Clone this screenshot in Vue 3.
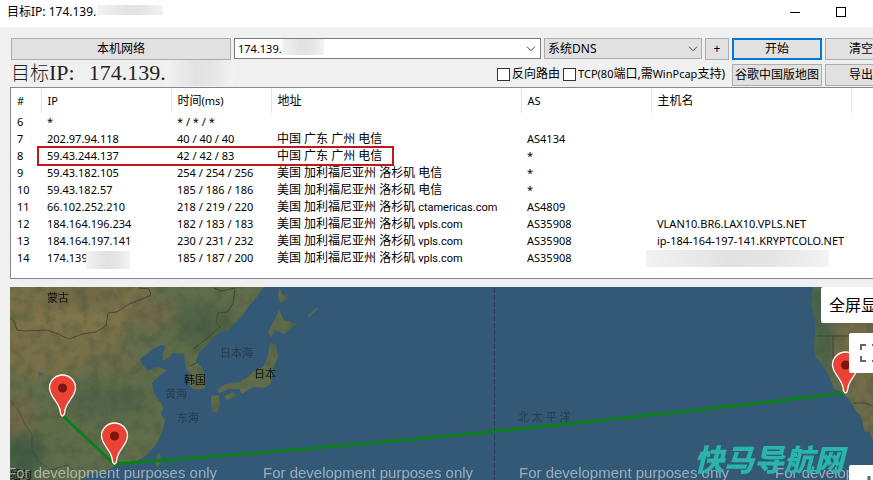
<script setup>
import { ref } from 'vue'

const address = ref('174.139.')
const dns = ref('系统DNS')
const reverse = ref(false)
const tcp = ref(false)

const hops = [
  { n: 6, ip: '*', time: '* / * / *' },
  { n: 7, ip: '202.97.94.118', time: '40 / 40 / 40', place: '中国 广东 广州 电信', as: 'AS4134' },
  { n: 8, ip: '59.43.244.137', time: '42 / 42 / 83', place: '中国 广东 广州 电信', as: '*', marked: true },
  { n: 9, ip: '59.43.182.105', time: '254 / 254 / 256', place: '美国 加利福尼亚州 洛杉矶 电信', as: '*' },
  { n: 10, ip: '59.43.182.57', time: '185 / 186 / 186', place: '美国 加利福尼亚州 洛杉矶 电信', as: '*' },
  { n: 11, ip: '66.102.252.210', time: '218 / 219 / 220', place: '美国 加利福尼亚州 洛杉矶', domain: 'ctamericas.com', as: 'AS4809' },
  { n: 12, ip: '184.164.196.234', time: '182 / 183 / 183', place: '美国 加利福尼亚州 洛杉矶', domain: 'vpls.com', as: 'AS35908', host: 'VLAN10.BR6.LAX10.VPLS.NET' },
  { n: 13, ip: '184.164.197.141', time: '230 / 231 / 232', place: '美国 加利福尼亚州 洛杉矶', domain: 'vpls.com', as: 'AS35908', host: 'ip-184-164-197-141.KRYPTCOLO.NET' },
  { n: 14, ip: '174.139', time: '185 / 187 / 200', place: '美国 加利福尼亚州 洛杉矶', domain: 'vpls.com', as: 'AS35908', masked: true }
]

const pins = [
  { x: 62, y: 388 },
  { x: 114, y: 436 },
  { x: 845, y: 365 }
]
const notices = [7, 263, 519, 775]
</script>

<template>
  <div class="screen">
    <div class="window">
      <header class="titlebar">
        <span class="title">目标IP: 174.139.</span>
        <span class="mask mask-title"></span>
        <div class="caption">
          <button type="button" aria-label="最小化"><svg width="12" height="12"><path d="M1 6.5H11" stroke="#000" /></svg></button>
          <button type="button" aria-label="最大化"><svg width="12" height="12"><rect x="1.5" y="1.5" width="9" height="9" fill="none" stroke="#000" /></svg></button>
        </div>
      </header>

      <main class="body">
        <div class="toolbar">
          <button type="button" class="btn local">本机网络</button>
          <div class="combo">
            <input v-model="address" type="text" aria-label="目标地址" />
            <span class="mask mask-combo"></span>
            <button type="button" class="drop" aria-label="展开">
              <svg width="10" height="6"><path d="M1 .7L5 4.7L9 .7" fill="none" stroke="#444" /></svg>
            </button>
          </div>
          <div class="dns">
            <select v-model="dns" aria-label="DNS"><option>系统DNS</option></select>
            <svg width="10" height="6"><path d="M1 .7L5 4.7L9 .7" fill="none" stroke="#444" /></svg>
          </div>
          <button type="button" class="btn plus">+</button>
          <button type="button" class="btn action primary">开始</button>
          <button type="button" class="btn side">清空</button>
        </div>

        <div class="toolbar second">
          <h1><span><b>目标</b>IP:</span><span>174.139.</span></h1>
          <span class="mask mask-heading"></span>
          <div class="checks">
            <label><input v-model="reverse" type="checkbox" />反向路由</label>
            <label><input v-model="tcp" type="checkbox" /><span><small>TCP(80</small>端口,需<small>WinPcap</small>支持)</span></label>
          </div>
          <button type="button" class="btn action">谷歌中国版地图</button>
          <button type="button" class="btn side">导出</button>
        </div>

        <div class="list">
          <table>
            <colgroup>
              <col class="c-n" /><col class="c-ip" /><col class="c-time" /><col class="c-place" /><col class="c-as" /><col class="c-host" /><col />
            </colgroup>
            <thead>
              <tr><th>#</th><th>IP</th><th><b>时间</b>(ms)</th><th><b>地址</b></th><th>AS</th><th><b>主机名</b></th><th></th></tr>
            </thead>
            <tbody>
              <tr v-for="h in hops" :key="h.n">
                <td>{{ h.n }}<span v-if="h.marked" class="marker"></span></td>
                <td>{{ h.ip }}<span v-if="h.masked" class="mask mask-ip"></span></td>
                <td>{{ h.time }}</td>
                <td class="place"><b>{{ h.place }}</b> <span class="domain">{{ h.domain }}</span></td>
                <td>{{ h.as }}</td>
                <td>{{ h.host }}<span v-if="h.masked" class="mask mask-host"></span></td>
                <td></td>
              </tr>
            </tbody>
          </table>
        </div>

        <div class="map">
          <svg class="canvas" viewBox="10 287 887 193" preserveAspectRatio="xMinYMin slice">
            <defs>
              <clipPath id="land">
                <path d="M10 287H264L256 298L248 307L243 315L235 323L229 330L220 332L212 339L205 347L199 352L196 361L203 369L206 380L205 388L198 390L191 388L189 380L190 374L186 368L185 361L184 354L173 353L166 360L162 360L163 353L166 346L161 345L153 349L147 354L140 359L142 364L148 371L157 367L167 370L160 375L152 383L154 393L161 403L163 409L161 414L165 420L163 430L157 443L147 455L137 461L126 464L115 466L104 472L92 473L84 478L82 480H10Z" />
                <path d="M279 287L282 294L288 298L281 303L278 297ZM279 310L284 320L297 324L290 329L284 334L275 330L271 337L268 332L274 321Z" />
                <path d="M270 342L276 345L278 357L273 368L271 384L264 388L255 387L248 390L242 394L239 389L229 389L219 393L217 389L226 384L236 383L247 378L254 371L263 367L268 356ZM224 396L233 392L236 396L227 400ZM211 396L219 395L220 405L217 412L212 411L211 404ZM157 456L160 452L161 460L158 468L155 464ZM308 315L317 308L318 309L309 317Z" />
                <path d="M813 287H915V480H884L875 443L869 431L865 432L861 417L856 411L849 399L839 391L834 389L830 378L824 367L816 357L814 348L816 326L812 306Z" />
              </clipPath>
              <filter id="soft" color-interpolation-filters="sRGB"><feGaussianBlur stdDeviation="6" /></filter>
              <filter id="terrain" x="0" y="0" width="1" height="1" color-interpolation-filters="sRGB">
                <feTurbulence type="fractalNoise" baseFrequency=".09" numOctaves="3" seed="8" />
                <feColorMatrix values="0 0 0 0 .24  0 0 0 0 .31  0 0 0 0 .22  2.6 0 0 0 -1.1" />
              </filter>
            </defs>
            <rect x="10" y="287" width="905" height="193" fill="#345976" />
            <g clip-path="url(#land)">
              <rect x="10" y="287" width="905" height="193" fill="#606d4b" />
              <g filter="url(#soft)">
                <path d="M0 277H160L132 315L115 350L75 373L30 380L0 376Z" fill="#7a7048" />
                <path d="M30 287H130L110 307L60 303Z" fill="#706847" />
                <ellipse cx="75" cy="320" rx="55" ry="10" fill="#80754a" />
                <ellipse cx="150" cy="314" rx="24" ry="14" fill="#74694a" />
                <ellipse cx="115" cy="362" rx="28" ry="14" fill="#6b6c4a" />
                <ellipse cx="20" cy="415" rx="14" ry="24" fill="#72694a" />
                <ellipse cx="24" cy="455" rx="20" ry="22" fill="#455c46" />
                <ellipse cx="105" cy="402" rx="44" ry="15" fill="#52644a" />
                <ellipse cx="205" cy="325" rx="30" ry="20" fill="#4f6247" />
                <path d="M830 315H925V490H880L860 410L840 385L829 340Z" fill="#746b4a" />
                <path d="M803 287H835L830 380L811 350Z" fill="#4a644a" />
              </g>
              <rect x="10" y="287" width="905" height="193" filter="url(#terrain)" opacity=".34" />
              <path d="M38 371L44 374L39 377Z" fill="#40647a" />
            </g>
            <g fill="none" stroke="#333d31" stroke-width="1" opacity=".75">
              <path d="M10 318L14 321L17 330L25 331L47 330L58 334L69 339L82 334L96 332L106 326L108 313L117 312L129 304L142 299L151 295L149 289L139 288" />
              <path d="M214 288L222 291L235 288L233 304L227 312L218 313L216 322L220 327L213 333L205 340L193 349" />
              <path d="M10 400L18 410L26 426L32 434V450L39 462L52 470L67 465L79 474" opacity=".65" />
              <path d="M190 366L198 362M853 403L865 403L876 407M817 336H868M833 336V359" />
            </g>
            <path d="M494.500 288V480" stroke="#263d5b" stroke-width="1" stroke-dasharray="5 2" />
            <g class="places">
              <text x="47" y="302">蒙古</text><text x="184" y="384">韩国</text><text x="254" y="378">日本</text>
              <text x="10" y="479">缅甸</text>
            </g>
            <g class="seas">
              <text x="220" y="357">日本海</text><text x="165" y="398">黄海</text><text x="177" y="422">东海</text>
              <text x="518" y="421">北 太 平 洋</text>
            </g>
            <path d="M62 415L114 464Q470 438 845 393" fill="none" stroke="#098017" stroke-width="3" />
            <g class="notice"><text v-for="x in notices" :key="x" :x="x" y="478">For development purposes only</text></g>
            <g v-for="p in pins" :key="p.x" :transform="`translate(${p.x} ${p.y})`">
              <path d="M.5 28C-1.500 28-1.500 26-2 22C-4 13-12.500 8-12.500 0A13 13 0 0 1 13.500 0C13.500 8 5 13 3 22C2.500 26 2.500 28 .5 28Z" fill="#ea4335" stroke="#fff" stroke-width="1.300" />
              <circle cx=".5" cy="0" r="4.500" fill="#811411" />
            </g>
          </svg>
          <button type="button" class="float full-text">全屏显示</button>
          <button type="button" class="float full-icon" aria-label="全屏">
            <svg width="18" height="18"><path d="M1 6V1H6M12 1H17V6M17 12V17H12M6 17H1V12" fill="none" stroke="#666" stroke-width="2" /></svg>
          </button>
          <button type="button" class="float zoom-in" aria-label="放大">
            <svg width="18" height="18"><path d="M9 0V18M0 9H18" stroke="#666" stroke-width="3" /></svg>
          </button>
          <div class="brand">快马导航网</div>
        </div>
      </main>
    </div>
  </div>
</template>

<style>
body { margin: 0; }
</style>

<style scoped>
* { box-sizing: border-box; }
.screen {
  min-height: 100vh;
  overflow: hidden;
  display: flex;
  font: 12px/16px "Noto Sans", "Noto Sans CJK SC", sans-serif;
  color: #000;
}
.window {
  flex: none;
  width: calc(100% + 30px);
  display: flex;
  flex-direction: column;
  background: #f0f0f0;
}
button, input, select { font: inherit; color: inherit; margin: 0; }
.mask { position: absolute; background: linear-gradient(90deg, #f2f2f2, #e2e2e2 45%, #e5e5e5 70%, #f3f3f3); }

.titlebar {
  position: relative;
  display: flex;
  align-items: center;
  height: 27px;
  padding: 0 39px 4px 7px;
  background: #fff;
}
.mask-title { left: 97px; top: 5px; width: 66px; height: 10px; }
.caption { margin-left: auto; display: flex; }
.caption button { width: 46px; height: 22px; padding: 0; border: 0; background: none; display: grid; place-items: center; }

.body { flex: 1; display: flex; flex-direction: column; padding: 11px 6px 0 10px; }
.toolbar { position: relative; display: flex; gap: 3px; height: 22px; padding-left: 1px; }
.second { margin-top: 4px; margin-bottom: 1px; }
.btn { padding: 0; background: #e1e1e1; border: 1px solid #adadad; white-space: nowrap; line-height: 20px; }
.local { width: 220px; }
.plus { width: 24px; }
.action { width: 90px; flex: none; }
.side { width: 72px; flex: none; }
.primary { border: 2px solid #0078d7; line-height: 18px; }
.combo { position: relative; flex: 1; display: flex; background: #fff; border: 1px solid #7a7a7a; height: 21px; }
.combo input { flex: 1; min-width: 0; border: 0; padding: 0 3px; background: none; font-size: 11px; outline: 0; }
.mask-combo { left: 47px; top: 0; width: 42px; height: 16px; }
.drop { width: 18px; border: 0; padding: 0; background: none; display: grid; place-items: center; }
.dns { position: relative; width: 158px; height: 21px; }
.dns select { appearance: none; width: 100%; height: 100%; padding: 0 3px; border: 1px solid #adadad; border-radius: 0; background: #e1e1e1; }
.dns svg { position: absolute; right: 4px; top: 8px; pointer-events: none; }

h1 { margin: 0; display: flex; gap: 14px; font: 400 22px/18px "Liberation Serif", "Noto Sans CJK SC", serif; color: #222; }
h1 b { font-size: 19px; font-weight: 300; }
.mask-heading { left: 155px; top: -4px; width: 68px; height: 26px; }
.checks { margin-left: auto; display: flex; gap: 3px; padding-right: 4px; }
.checks label { display: flex; align-items: center; gap: 2px; height: 20px; white-space: nowrap; }
.checks small { font-size: 11px; }
.checks input { appearance: none; width: 13px; height: 13px; border: 1px solid #333; background: #fff; }
.checks input:checked { background: #0078d7; }

.list { height: 192px; border: 1px solid #828790; background: #fff; }
table { width: 100%; table-layout: fixed; border-collapse: collapse; font-size: 11px; line-height: 17px; }
td b, th b { font-weight: 400; font-size: 12px; }
.domain { font-family: Roboto, sans-serif; }
.c-n { width: 30px; }
.c-ip { width: 130px; }
.c-time { width: 100px; }
.c-place { width: 250px; }
.c-as { width: 130px; }
.c-host { width: 200px; }
th { height: 25px; padding: 0 6px; text-align: left; font-weight: 400; border-right: 1px solid #e5e5e5; }
th:last-child { border-right: 0; }
td { position: relative; height: 17px; padding: 0 6px; line-height: 16px; white-space: nowrap; }
.place b, .place .domain { line-height: 12px; }
.marker { position: absolute; left: 26px; top: -1px; width: 357px; height: 20px; border: 2px solid #c1161b; z-index: 1; pointer-events: none; }
.mask-ip { left: 45px; top: 2px; width: 44px; height: 18px; }
.mask-host { left: -5px; top: 1px; width: 183px; height: 17px; }

.map { position: relative; flex: 1; min-height: 193px; margin-top: 8px; overflow: hidden; background: #345976; }
.canvas { position: absolute; width: 100%; height: 100%; }
.places { font-size: 11px; fill: #111; }
.seas { font-size: 11px; fill: #263b50; }
.notice { font: 15px "Liberation Sans", sans-serif; fill: #fff; fill-opacity: .5; }
.float { position: absolute; border: 0; background: #fff; border-radius: 2px; padding: 0; display: grid; place-items: center; }
.full-text { right: -4px; top: 0; height: 36px; width: 80px; font-size: 16px; }
.full-icon { right: 8px; top: 46px; width: 40px; height: 40px; }
.zoom-in { right: 8px; top: 178px; width: 40px; height: 40px; }
.brand { position: absolute; right: 53px; top: 149px; font: italic 900 30px/44px "Noto Sans CJK SC", sans-serif; color: #2ab5ac; white-space: nowrap; }
</style>
